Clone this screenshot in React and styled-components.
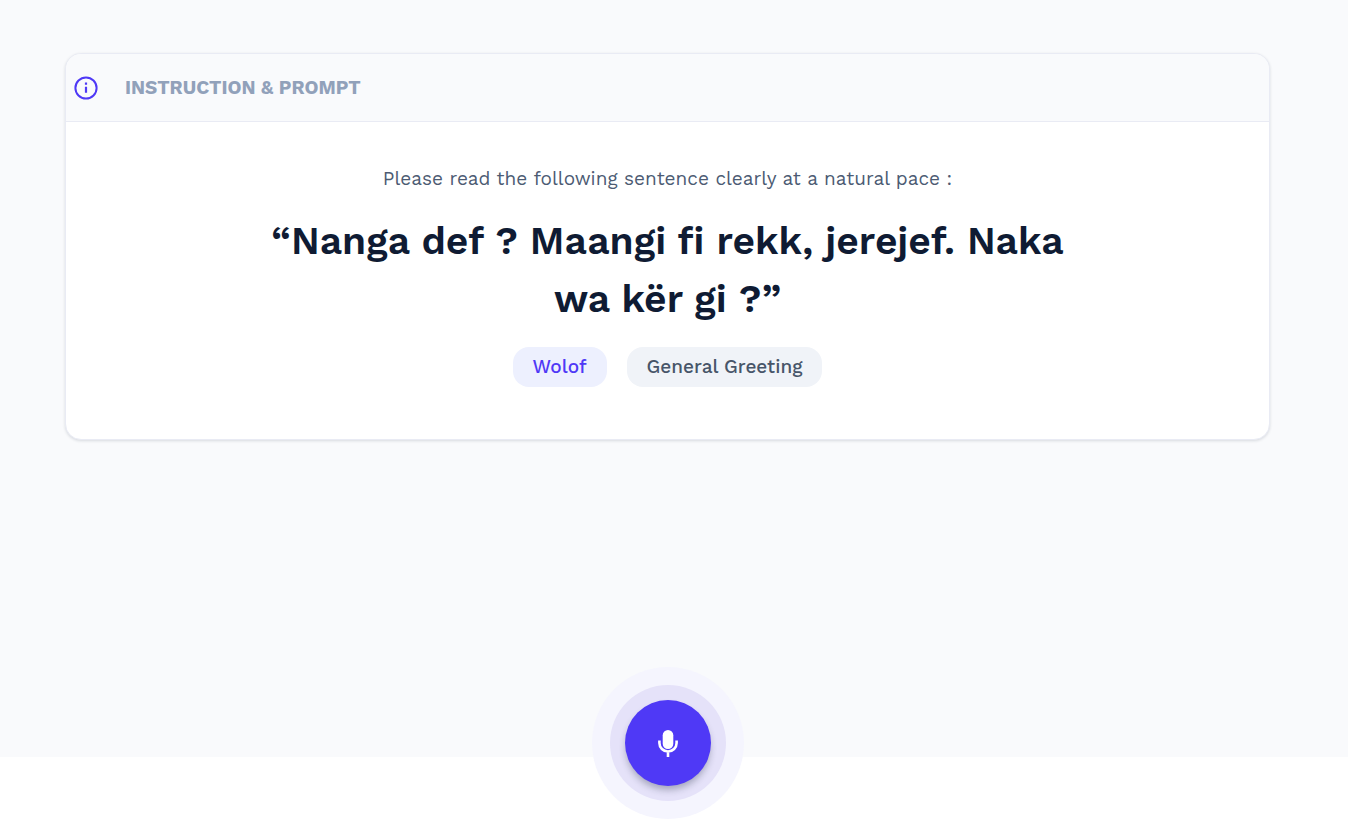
import React from 'react';
import styled, { createGlobalStyle } from 'styled-components';

const GlobalStyle = createGlobalStyle`
  * {
    box-sizing: border-box;
  }
  body {
    margin: 0;
    background: #ffffff;
    color: #0f1b33;
    font-family: 'Work Sans', Inter, 'Open Sans', sans-serif;
  }
`;

const Stage = styled.main`
  padding: 53px 78px 317px 65px;
  background: #f9fafc;
`;

const Card = styled.section`
  overflow: hidden;
  border: 1px solid #e9ebf4;
  border-radius: 16px;
  background: #ffffff;
  box-shadow: 0 1px 3px rgba(15, 27, 51, 0.14);
`;

const CardHeader = styled.header`
  display: flex;
  align-items: center;
  gap: 27px;
  height: 68px;
  padding: 0 8px;
  border-bottom: 1px solid #e9ebf4;
  background: #f9fafc;
`;

const CardTitle = styled.h2`
  margin: 0;
  color: #91a1ba;
  font-size: 19px;
  font-weight: 700;
  line-height: 24px;
  text-transform: uppercase;
`;

const CardBody = styled.div`
  display: flex;
  flex-direction: column;
  align-items: center;
  padding: 45px 40px 52px;
  text-align: center;
`;

const Hint = styled.p`
  margin: 0 0 21px;
  color: #4c5b73;
  font-size: 19px;
  font-weight: 400;
  line-height: 24px;
`;

const Sentence = styled.blockquote`
  max-width: 820px;
  margin: 0 0 19px;
  font-size: 39px;
  font-weight: 600;
  line-height: 58px;
`;

const Tags = styled.ul`
  display: flex;
  gap: 20px;
  margin: 0;
  padding: 0;
  list-style: none;
`;

const Tag = styled.li`
  padding: 8px 20px;
  border-radius: 16px;
  background: ${props => (props.$primary ? '#edf0fe' : '#f0f3f8')};
  color: ${props => (props.$primary ? '#4f39f6' : '#475569')};
  font-size: 19px;
  font-weight: 500;
  line-height: 24px;
`;

const Recorder = styled.div`
  display: flex;
  justify-content: center;
  margin-top: -90px;
  padding: 0 78px 5px 65px;
`;

const OuterRing = styled.div`
  position: relative;
  padding: 18px;
  border-radius: 50%;
  background: #f5f5fe;
`;

const InnerRing = styled.div`
  padding: 15px;
  border-radius: 50%;
  background: #e5e2f9;
`;

const RecordButton = styled.button`
  display: flex;
  align-items: center;
  justify-content: center;
  width: 86px;
  height: 86px;
  padding: 0;
  border: 0;
  border-radius: 50%;
  background: #4f39f6;
  color: #ffffff;
  box-shadow: 0 5px 7px -1px rgba(15, 27, 51, 0.3);
  cursor: pointer;
`;

const InfoIcon = () => (
  <svg width="24" height="24" viewBox="0 0 24 24" fill="none" aria-hidden="true">
    <circle cx="12" cy="12" r="10.6" stroke="#4f39f6" strokeWidth="2" />
    <path d="M12 10.8v6M12 6.6v2.2" stroke="#4f39f6" strokeWidth="2.2" />
  </svg>
);

const MicIcon = () => (
  <svg width="20" height="27" viewBox="0 0 20 27" fill="none" aria-hidden="true">
    <rect x="4.7" y="0" width="10.6" height="19" rx="5.3" fill="currentColor" />
    <path
      d="M1.4 10.5v2.4a8.6 8.6 0 0 0 17.2 0v-2.4M10 21.5V27"
      stroke="currentColor"
      strokeWidth="2.6"
    />
  </svg>
);

const TAGS = [
  { label: 'Wolof', primary: true },
  { label: 'General Greeting', primary: false },
];

function App() {
  return (
    <>
      <GlobalStyle />
      <Stage>
        <Card>
          <CardHeader>
            <InfoIcon />
            <CardTitle>Instruction &amp; Prompt</CardTitle>
          </CardHeader>
          <CardBody>
            <Hint>
              Please read the following sentence clearly at a natural pace :
            </Hint>
            <Sentence>
              “Nanga def ? Maangi fi rekk, jerejef. Naka wa kër gi ?”
            </Sentence>
            <Tags>
              {TAGS.map(tag => (
                <Tag key={tag.label} $primary={tag.primary}>
                  {tag.label}
                </Tag>
              ))}
            </Tags>
          </CardBody>
        </Card>
      </Stage>
      <Recorder>
        <OuterRing>
          <InnerRing>
            <RecordButton type="button" aria-label="Record">
              <MicIcon />
            </RecordButton>
          </InnerRing>
        </OuterRing>
      </Recorder>
    </>
  );
}

export default App;
